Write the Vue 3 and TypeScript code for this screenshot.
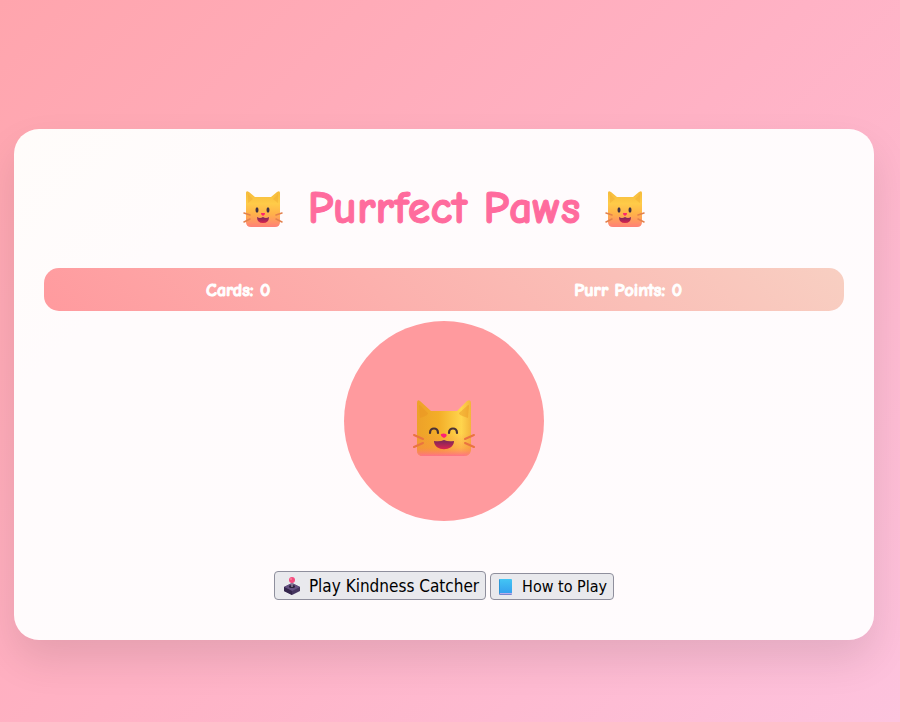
<script setup lang="ts">
import { ref } from 'vue'

const cards = ref(0)
const points = ref(0)
const titleCats = ['left', 'right'] as const
</script>

<template>
  <svg class="defs" aria-hidden="true">
    <defs>
      <linearGradient id="fur" x1="0" y1="0" x2="0" y2="1">
        <stop offset="0" stop-color="#f5bb3a" />
        <stop offset=".35" stop-color="#ffcb48" />
        <stop offset=".65" stop-color="#ffb04a" />
        <stop offset="1" stop-color="#ff8078" />
      </linearGradient>
      <linearGradient id="bigFur" x1="0" y1="0" x2="1" y2="0">
        <stop offset="0" stop-color="#eda129" />
        <stop offset=".4" stop-color="#f3ae28" />
        <stop offset=".82" stop-color="#ffd54d" />
        <stop offset="1" stop-color="#f4b43b" />
      </linearGradient>
      <linearGradient id="blush" x1="0" y1="0" x2="0" y2="1">
        <stop offset=".3" stop-color="#ff8055" stop-opacity="0" />
        <stop offset=".75" stop-color="#fb8848" stop-opacity=".45" />
        <stop offset="1" stop-color="#ff7289" />
      </linearGradient>
      <linearGradient id="mouth" x1="0" y1="0" x2="0" y2="1">
        <stop offset="0" stop-color="#752659" />
        <stop offset="1" stop-color="#db2450" />
      </linearGradient>
      <linearGradient id="book" x1="0" y1="0" x2="0" y2="1">
        <stop offset="0" stop-color="#43c5f4" />
        <stop offset="1" stop-color="#35a1ee" />
      </linearGradient>
    </defs>
  </svg>
  <main class="page">
    <section class="card">
      <h1 class="title">
        <template v-for="side in titleCats" :key="side">
          <svg class="title-cat" viewBox="0 0 40 38" aria-hidden="true">
            <path fill="url(#fur)" d="M3 3Q3 0 6 2L12 7H28L34 2Q37 0 37 3V32Q37 37 32 37H8Q3 37 3 32Z" />
            <path fill="#eda72f" opacity=".4" d="M5 4L10 9L5 13ZM35 4L30 9L35 13Z" />
            <path fill="none" stroke="#e3814d" stroke-width="1.500" stroke-linecap="round" d="M1 23L7 25M1 32L7 29M39 23L33 25M39 32L33 29" />
            <ellipse cx="14" cy="20" rx="1.500" ry="2.800" fill="#423044" />
            <ellipse cx="25" cy="20" rx="1.500" ry="2.800" fill="#423044" />
            <path fill="#ff246e" d="M18 23H22Q22.500 24.500 20 26Q17.500 24.500 18 23Z" />
            <path fill="url(#mouth)" d="M14 27Q17 29 20 27Q23 29 26 27Q26 33 20 33Q14 33 14 27Z" />
          </svg>
          <span v-if="side === 'left'">Purrfect Paws</span>
        </template>
      </h1>
      <div class="stats">
        <span>Cards: {{ cards }}</span>
        <span>Purr Points: {{ points }}</span>
      </div>
      <div class="mascot">
        <svg class="mascot-cat" viewBox="0 0 64 58" aria-hidden="true">
          <path fill="url(#bigFur)" d="M5 4Q5 0 8 2L19 12H45L55 2Q59 0 59 4V51Q58 57 52 57H11Q5 57 5 51Z" />
          <path fill="url(#blush)" d="M5 25H59V51Q58 57 52 57H11Q5 57 5 51Z" />
          <path fill="#e99321" opacity=".45" d="M7 7Q7 5 9 7L16 14Q17 16 8 19ZM57 7Q57 5 55 7L47 14Q46 16 56 19Z" />
          <path fill="none" stroke="#ea7440" stroke-width="2" stroke-linecap="round" d="M2 36L11 40M2 48L11 44M62 36L53 40M62 48L53 44" />
          <path fill="none" stroke="#4a3136" stroke-width="2.200" stroke-linecap="round" d="M18 34C18 28 26 28 26 34M37 34C37 28 45 28 45 34" />
          <path fill="#ff1e75" d="M29 35Q32 34 34 35Q36 37 32 39Q28 37 29 35Z" />
          <path fill="url(#mouth)" d="M22 42Q28 43 32 41Q36 43 42 42C42 53 22 53 22 42Z" />
        </svg>
      </div>
      <div class="actions">
        <button class="button play" type="button">
          <svg class="joystick" viewBox="0 0 18 18" aria-hidden="true">
            <path fill="#45355f" d="M1 10L9 6L17 10V14L9 18L1 14Z" />
            <path fill="#655080" d="M1 10L9 6L17 10L9 14Z" />
            <path fill="#35264d" d="M1 10L9 14V18L1 14Z" />
            <ellipse cx="9" cy="9.500" rx="3" ry="1.500" fill="#2b203c" />
            <path stroke="#93859d" stroke-width="1.500" d="M9 5V10" />
            <circle cx="9" cy="3" r="3" fill="#f54b7f" />
            <circle cx="8" cy="2" r="1" fill="#ff8099" />
          </svg>
          <span>Play Kindness Catcher</span>
        </button>
        <button class="button help" type="button">
          <svg class="book" viewBox="0 0 13 16" aria-hidden="true">
            <rect y="1" width="13" height="15" rx="1" fill="#7886cf" />
            <rect x="1" y="14" width="12" height="1" fill="#bbaeea" />
            <rect width="13" height="14" rx="1" fill="url(#book)" />
            <path fill="#2d98d8" d="M0 1L1 0V14L0 15Z" />
          </svg>
          <span>How to Play</span>
        </button>
      </div>
    </section>
  </main>
</template>

<style>
body {
  margin: 0;
}
</style>

<style scoped>
.defs {
  position: absolute;
  width: 0;
  height: 0;
}

.page {
  box-sizing: border-box;
  display: flex;
  align-items: center;
  justify-content: center;
  min-height: 100vh;
  padding: 47px 26px 0 14px;
  overflow: hidden;
  background: linear-gradient(135deg, #ffa5ad 0%, #ffb2c5 50%, #fdc2dd 100%);
  font-family: "Comic Sans MS", "Comic Neue", Lato, sans-serif;
}

.card {
  box-sizing: border-box;
  width: 100%;
  max-width: 860px;
  padding: 30px;
  border-radius: 25px;
  background: linear-gradient(135deg, #fffcfa 0%, #fffbfc 20%, #fffbfd 100%);
  box-shadow: 0 20px 40px rgba(0, 0, 0, 0.1);
}

.title {
  display: flex;
  align-items: center;
  justify-content: center;
  gap: 25px;
  height: 60px;
  margin: 20px 0 29px;
  color: #ff6b9d;
  font-size: 46px;
  font-weight: 700;
  line-height: 58px;
  -webkit-text-stroke: 1px #ff6b9d;
}

.title-cat {
  width: 40px;
  height: 38px;
}

.stats {
  display: flex;
  justify-content: space-around;
  padding: 11px 10px 9px;
  border-radius: 15px;
  background: linear-gradient(45deg, #ff9a9e, #f8cfc2);
  color: #fff;
  font-size: 18px;
  font-weight: 700;
  line-height: 23px;
  -webkit-text-stroke: 1px #fff;
}

.mascot {
  display: flex;
  align-items: center;
  justify-content: center;
  width: 200px;
  height: 200px;
  margin: 10px auto 50px;
  border-radius: 50%;
  background: #ff9a9e;
}

.mascot-cat {
  width: 64px;
  height: 58px;
  margin-top: 13px;
}

.actions {
  display: flex;
  flex-wrap: wrap;
  align-items: flex-end;
  justify-content: center;
  gap: 4px;
  margin-bottom: 10px;
}

.button {
  display: flex;
  align-items: center;
  padding: 0 6px 0 8px;
  border: 1px solid #8f8f9d;
  border-radius: 4px;
  background: #e9e9ed;
  color: #000;
  font-family: Tahoma, "DejaVu Sans Condensed", "Noto Sans", sans-serif;
  cursor: pointer;
}

.button:hover {
  background: #d0d0d7;
}

.play {
  gap: 8px;
  height: 29px;
  font-size: 17px;
}

.help {
  gap: 10px;
  height: 27px;
  font-size: 16px;
}

.joystick {
  width: 18px;
  height: 18px;
}

.book {
  width: 13px;
  height: 16px;
}
</style>
